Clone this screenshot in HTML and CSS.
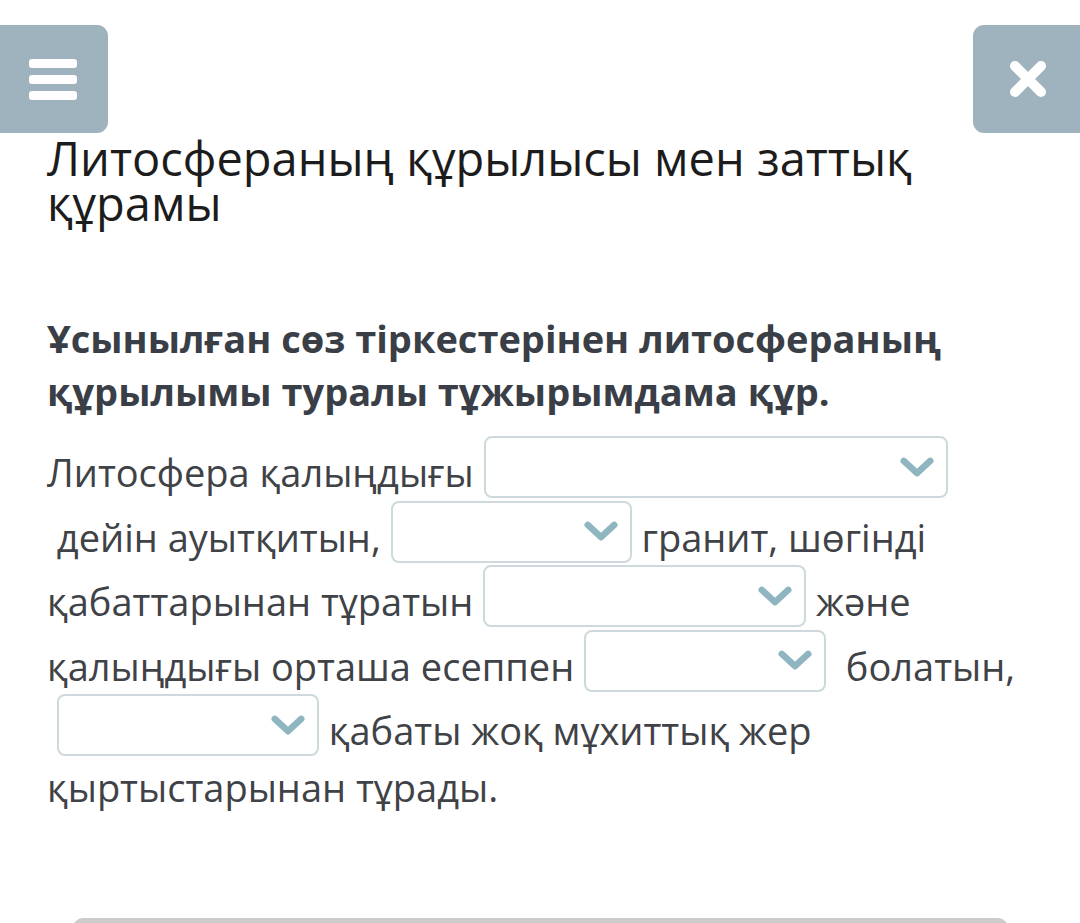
FILE: index.html
```html
<!DOCTYPE html>
<html lang="kk">
<head>
<meta charset="utf-8">
<title>Литосфераның құрылысы мен заттық құрамы</title>
<link rel="stylesheet" href="styles.css">
</head>
<body>
<div class="topbar">
  <button class="btn btn-menu" aria-label="Мәзір">
    <svg width="48" height="41" viewBox="0 0 48 41"><rect x="0" y="0" width="48" height="9" rx="3" fill="#fff"/><rect x="0" y="16" width="48" height="9" rx="3" fill="#fff"/><rect x="0" y="32" width="48" height="9" rx="3" fill="#fff"/></svg>
  </button>
  <button class="btn btn-close" aria-label="Жабу">
    <svg width="40" height="40" viewBox="0 0 40 40"><path d="M7 7 L33 33 M33 7 L7 33" stroke="#fff" stroke-width="10" stroke-linecap="round"/></svg>
  </button>
</div>
<main class="content">
  <h1 class="title">Литосфераның құрылысы мен заттық құрамы</h1>
  <p class="question">Ұсынылған сөз тіркестерінен литосфераның құрылымы туралы тұжырымдама құр.</p>
  <p class="answer">Литосфера қалыңдығы <span class="sel w1"><span class="sel-in"><svg class="chev" viewBox="0 0 36 22"><path d="M4 4 L18 17 L32 4" fill="none" stroke="#8fb6c0" stroke-width="7" stroke-linecap="round" stroke-linejoin="round"/></svg></span></span><br>&nbsp;дейін ауытқитын, <span class="sel w2"><span class="sel-in"><svg class="chev" viewBox="0 0 36 22"><path d="M4 4 L18 17 L32 4" fill="none" stroke="#8fb6c0" stroke-width="7" stroke-linecap="round" stroke-linejoin="round"/></svg></span></span> гранит, шөгінді<br>қабаттарынан тұратын <span class="sel w3"><span class="sel-in"><svg class="chev" viewBox="0 0 36 22"><path d="M4 4 L18 17 L32 4" fill="none" stroke="#8fb6c0" stroke-width="7" stroke-linecap="round" stroke-linejoin="round"/></svg></span></span> және<br>қалыңдығы орташа есеппен <span class="sel w4"><span class="sel-in"><svg class="chev" viewBox="0 0 36 22"><path d="M4 4 L18 17 L32 4" fill="none" stroke="#8fb6c0" stroke-width="7" stroke-linecap="round" stroke-linejoin="round"/></svg></span></span>&nbsp; болатын,<br>&nbsp;<span class="sel w5"><span class="sel-in"><svg class="chev" viewBox="0 0 36 22"><path d="M4 4 L18 17 L32 4" fill="none" stroke="#8fb6c0" stroke-width="7" stroke-linecap="round" stroke-linejoin="round"/></svg></span></span> қабаты жоқ мұхиттық жер<br>қыртыстарынан тұрады.</p>
</main>
<div class="footer-bar"></div>
</body>
</html>
```

FILE: styles.css
```css
html, body {
  margin: 0;
  padding: 0;
  background: #ffffff;
  overflow: hidden;
}
body {
  font-family: "Open Sans", "Noto Sans", sans-serif;
  width: 1080px;
  height: 923px;
}
.topbar {
  display: flex;
  justify-content: space-between;
  margin-top: 25px;
}
.btn {
  width: 108px;
  height: 108px;
  border: 0;
  padding: 0;
  background: #9fb3bf;
  display: flex;
  align-items: center;
  justify-content: center;
}
.btn-menu {
  border-radius: 0 11px 11px 0;
  padding-right: 2px;
}
.btn-close {
  width: 107px;
  border-radius: 11px 0 0 11px;
  padding-left: 2px;
}
.content {
  padding: 0 47px;
}
.title {
  margin: 3px 0 0;
  font-size: 47px;
  font-weight: 400;
  line-height: 45px;
  color: #1c1c1c;
}
.question {
  margin: 86px 0 0;
  font-size: 38px;
  font-weight: 700;
  line-height: 53px;
  color: #3a3e46;
}
.answer {
  margin: 18px 0 0;
  font-size: 38px;
  line-height: 56.6px;
  color: #3f4246;
}
.sel {
  display: inline-block;
  overflow: hidden;
  height: 62px;
  box-sizing: border-box;
  border: 2px solid #cdd9dc;
  border-radius: 8px;
  vertical-align: -11px;
  background: #fff;
}
.sel-in {
  display: flex;
  height: 100%;
  align-items: center;
  justify-content: flex-end;
  padding-right: 12px;
}
.chev {
  width: 34px;
  height: 21px;
}
.w1 { width: 464px; }
.w2 { width: 241px; }
.w3 { width: 323px; }
.w4 { width: 242px; }
.w5 { width: 262px; }
.footer-bar {
  margin: 102px 0 0 73px;
  width: 935px;
  height: 40px;
  background: #cbcbcb;
  border-radius: 10px 10px 0 0;
}
```
